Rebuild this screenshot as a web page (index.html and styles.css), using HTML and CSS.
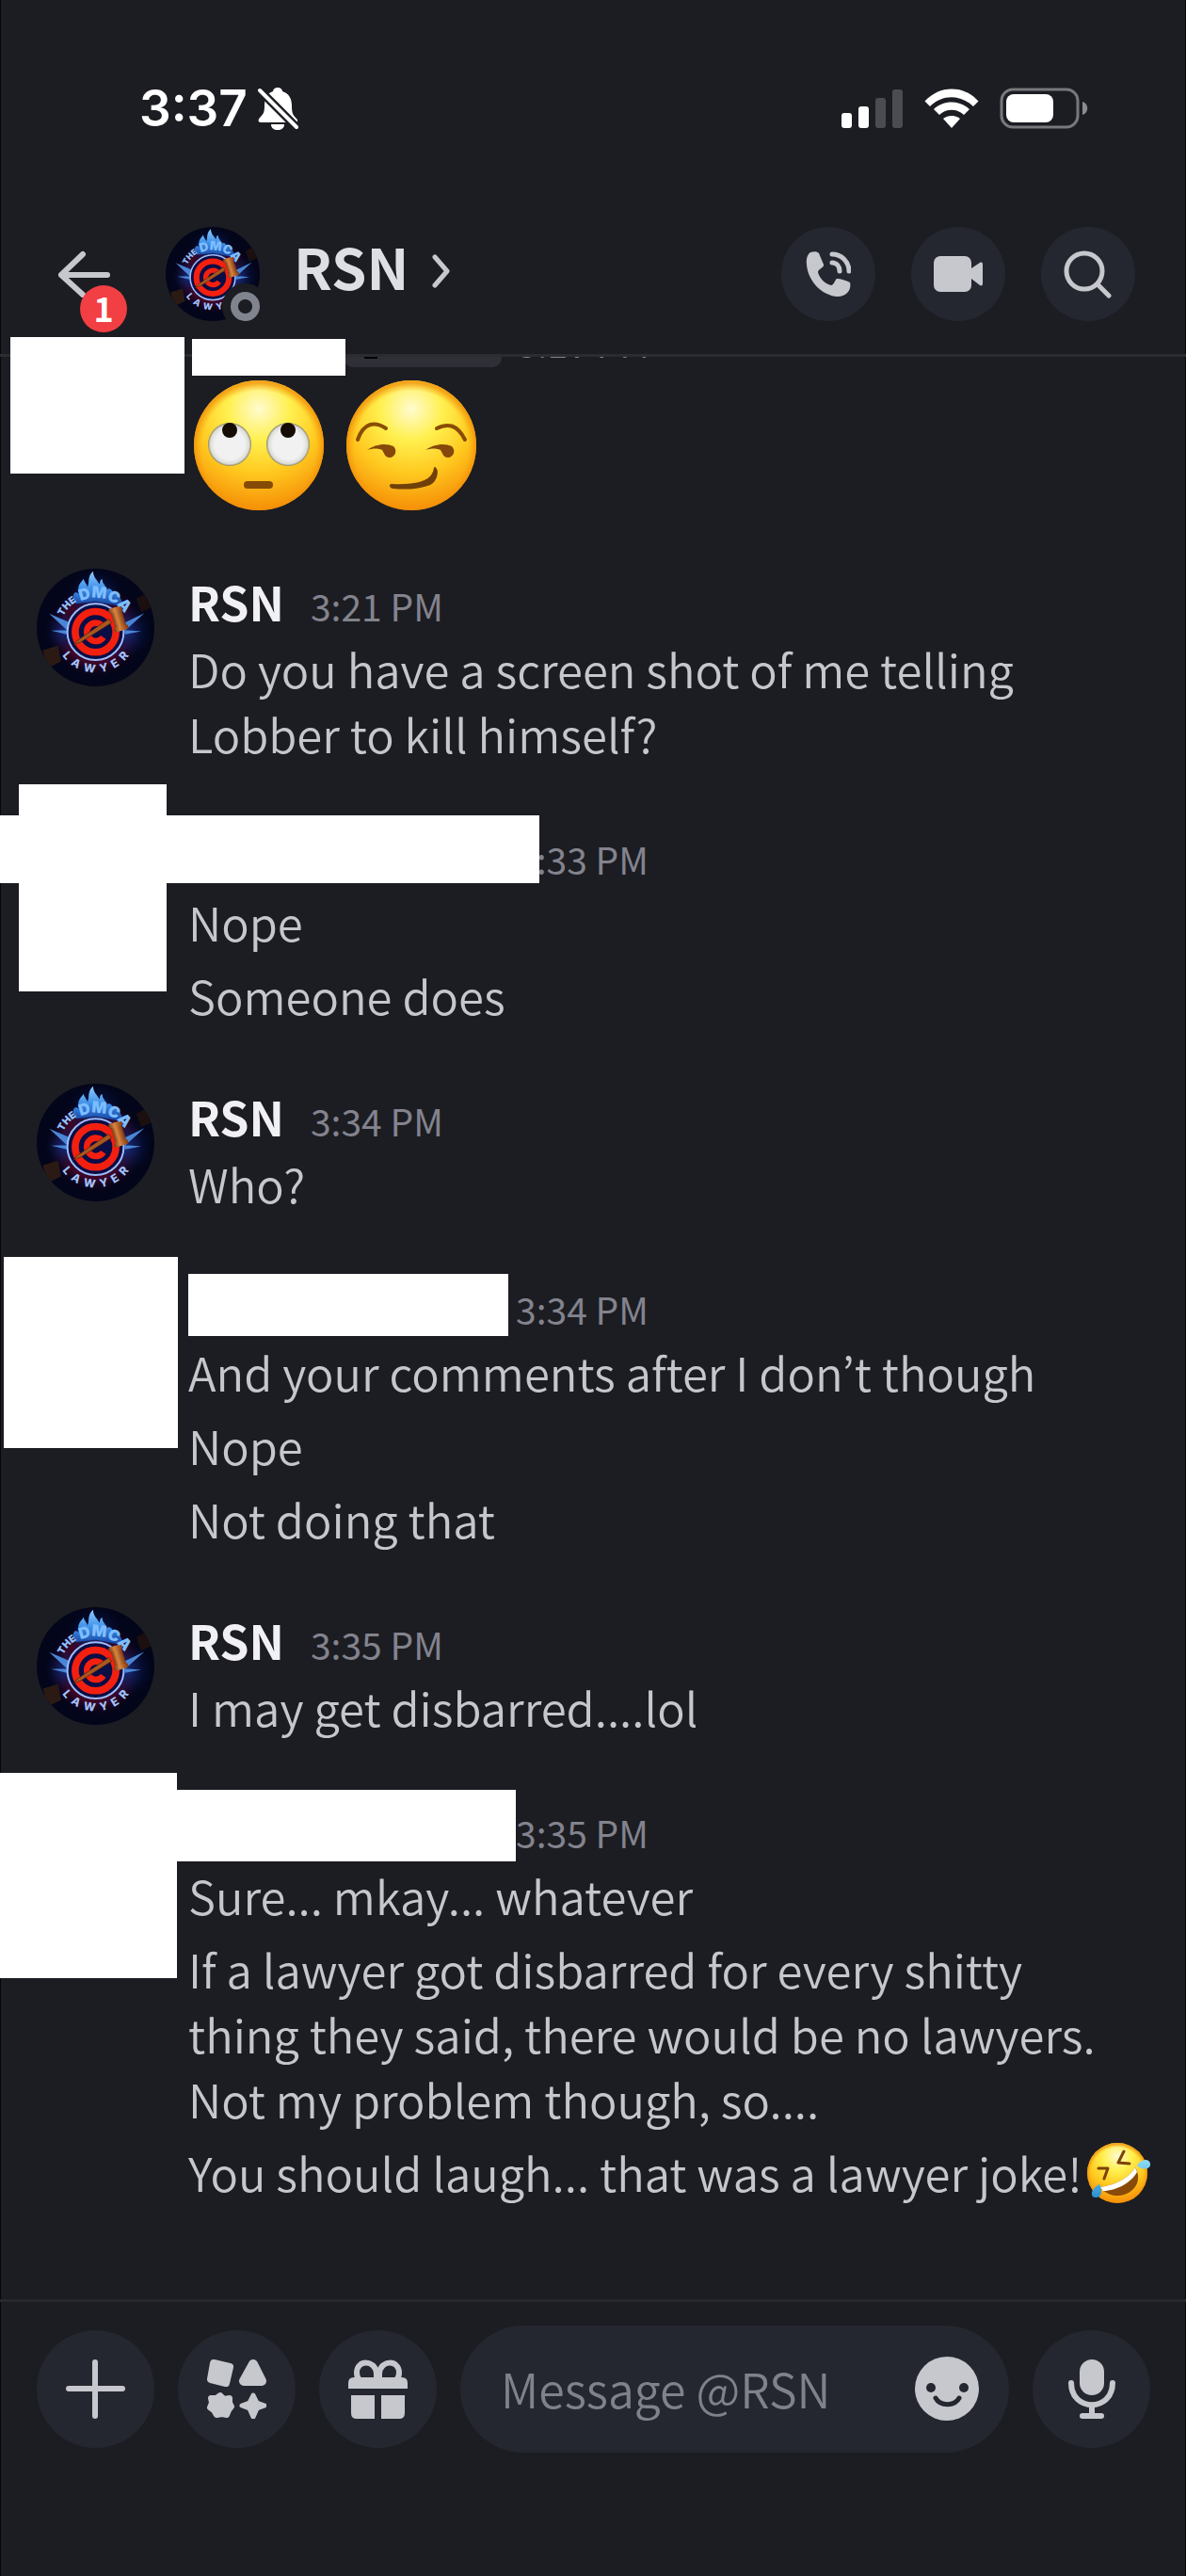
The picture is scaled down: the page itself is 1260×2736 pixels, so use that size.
FILE: index.html
```html
<!DOCTYPE html>
<html lang="en">
<head>
<meta charset="utf-8">
<meta name="viewport" content="width=device-width, initial-scale=1">
<title>RSN</title>
<link rel="stylesheet" href="styles.css">
</head>
<body>
<svg class="defs" aria-hidden="true">
  <defs>
    <radialGradient id="face" cx="50%" cy="22%" r="80%">
      <stop offset="0" stop-color="#fffbd0"/><stop offset=".3" stop-color="#fff04f"/>
      <stop offset=".62" stop-color="#ffc91f"/><stop offset="1" stop-color="#f58a05"/>
    </radialGradient>
    <radialGradient id="rim" cx="50%" cy="52%" r="50%">
      <stop offset=".88" stop-color="#f59a0c" stop-opacity="0"/><stop offset="1" stop-color="#f08c06" stop-opacity=".75"/>
    </radialGradient>
    <radialGradient id="eyeball" cx="50%" cy="50%" r="50%">
      <stop offset=".7" stop-color="#f1f1f1"/><stop offset=".9" stop-color="#dcdcd8"/><stop offset="1" stop-color="#8b8460"/>
    </radialGradient>
    <linearGradient id="tear" x1="0" y1="0" x2="0" y2="1">
      <stop offset="0" stop-color="#8fdcf8"/><stop offset="1" stop-color="#2a8fd0"/>
    </linearGradient>
    <radialGradient id="glowBlue"><stop offset="0" stop-color="#0a338c"/><stop offset="1" stop-color="#04103c" stop-opacity="0"/></radialGradient>
    <radialGradient id="glowRed"><stop offset=".7" stop-color="#3d0628"/><stop offset="1" stop-color="#14041c" stop-opacity="0"/></radialGradient>
    <linearGradient id="flame" x1="0" y1="0" x2="0" y2="1"><stop offset="0" stop-color="#8fcbff"/><stop offset=".5" stop-color="#3d8fe8"/><stop offset="1" stop-color="#123f9c"/></linearGradient>
    <linearGradient id="wood" x1="0" y1="0" x2="1" y2="0"><stop offset="0" stop-color="#7a3a16"/><stop offset=".4" stop-color="#d98540"/><stop offset="1" stop-color="#7a3512"/></linearGradient>
    <clipPath id="disc"><circle cx="188" cy="188" r="188"/></clipPath>
    <path id="arcThe" d="M74 201A114 114 0 0 1 302 201"/>
    <path id="arcTop" d="M80 201A108 108 0 0 1 296 201"/>
    <path id="arcBottom" d="M57 201A131 131 0 0 0 319 201"/>
  </defs>
  <symbol id="avatar" viewBox="0 0 376 376">
    <g clip-path="url(#disc)">
      <rect width="376" height="376" fill="#03051a"/>
      <circle cx="188" cy="196" r="152" fill="url(#glowRed)"/>
      <circle cx="280" cy="200" r="90" fill="url(#glowBlue)"/>
      <circle cx="95" cy="200" r="70" fill="url(#glowBlue)"/>
      <circle cx="188" cy="90" r="90" fill="url(#glowBlue)"/>
      <path d="M20 260l48-14 10 50-44 22z" fill="#2b1a14"/>
      <path d="M318 96l30-16 20 44-34 14z" fill="#1b100f"/>
      <path d="M40 144l66 28-8 26zM46 198l52-2-2 14zM344 142l-70 34 8 22zM334 200l-52-4v14z" fill="#4a86d6"/>
      <path d="M126 112C108 92 118 64 136 82c-10-28 6-38 14-50 2 12 10 16 12 26 8-14-2-32 18-50 2 24 14 26 20 42 4-6 0-14 10-16-2 14 12 18 12 32 12-6 22 2 20 14 18-2 30 16 36 42L188 104z" fill="url(#flame)"/>
      <circle cx="188" cy="202" r="90" fill="#0b0d45" stroke="#9dbcf8" stroke-width="6"/>
      <circle cx="188" cy="202" r="65" fill="none" stroke="#f4200f" stroke-width="23"/>
      <path d="M213 186a29 29 0 1 0 0 33" fill="none" stroke="#f4200f" stroke-width="20"/>
      <path d="M118 243l12-14 100-68 9 12-99 62z" fill="#a8581f" stroke="#4b1c10" stroke-width="2"/>
      <g transform="rotate(-17 260 160)">
        <rect x="243" y="130" width="36" height="62" fill="url(#wood)"/>
        <rect x="238" y="122" width="46" height="15" rx="5" fill="url(#wood)"/>
        <rect x="238" y="185" width="46" height="15" rx="5" fill="url(#wood)"/>
      </g>
      <text class="crest crest-the"><textPath href="#arcThe" startOffset="50">THE</textPath></text>
      <text class="crest crest-dmca"><textPath href="#arcTop" startOffset="120">DMCA</textPath></text>
      <text class="crest crest-lawyer"><textPath href="#arcBottom" startOffset="50%" text-anchor="middle">L&#8194;A&#8194;W&#8194;Y&#8194;E&#8194;R</textPath></text>
    </g>
  </symbol>
</svg>

<div class="app">
  <div class="status-bar">
    <div class="clock">
      <span>3:37</span>
      <svg width="44" height="46" viewBox="0 0 44 46" aria-label="Silent">
        <path d="M22 1c3 0 5 2 5 4 7 2 10 8 10 15 0 8 1 10 5 14 2 2 1 4-1 4H4c-3 0-3-3-1-5 4-4 5-6 5-13C8 12 11 7 17 5c0-2 2-4 5-4zM15 40h14c0 4-3 6-7 6s-7-2-7-6z" fill="#fff"/>
        <path d="M3 4l39 39" stroke="#1c1d22" stroke-width="9"/>
        <path d="M3 4l39 39" stroke="#fff" stroke-width="4" stroke-linecap="round"/>
      </svg>
    </div>
    <div class="indicators">
      <svg width="66" height="42" viewBox="0 0 66 42" aria-label="Signal"><g fill="#fff"><rect y="26" width="11" height="16" rx="3"/><rect x="18" y="19" width="11" height="23" rx="3"/></g><g fill="#4b4c51"><rect x="36" y="10" width="11" height="32" rx="3"/><rect x="54" y="1" width="11" height="41" rx="3"/></g></svg>
      <svg width="58" height="42" viewBox="0 0 58 42" aria-label="Wi-Fi"><path d="M0.500 13.500C16-4 42-4 57.500 13.500L52 19C39 6 19 6 6 19zM10 22C20 12 38 12 48 22l-6 6C35 21 23 21 16 28zM20 32c5-4 13-4 18 0l-9 10z" fill="#fff"/></svg>
      <svg width="94" height="44" viewBox="0 0 94 44" aria-label="Battery"><rect x="2" y="2" width="81" height="40" rx="12" fill="none" stroke="#77787c" stroke-width="3"/><rect x="7" y="7" width="50" height="30" rx="8" fill="#fff"/><path d="M88 15c7 2 7 12 0 14z" fill="#8a8b8f"/></svg>
    </div>
  </div>

  <header class="top-bar">
    <button class="back" type="button" aria-label="Back, 1 unread">
      <svg width="58" height="50" viewBox="0 0 58 50"><path d="M53 26H4M27 4L4 26l23 21" fill="none" stroke="#c7c8ce" stroke-width="6" stroke-linecap="round" stroke-linejoin="round"/></svg>
      <span class="badge">1</span>
    </button>
    <div class="peer-avatar">
      <svg width="100" height="100"><use href="#avatar"/></svg>
      <span class="presence"></span>
    </div>
    <h1 class="peer-name">RSN</h1>
    <svg class="chevron" width="20" height="36" viewBox="0 0 20 36" aria-hidden="true"><path d="M3 3l13 15L3 33" fill="none" stroke="#c7c8ce" stroke-width="5" stroke-linecap="round" stroke-linejoin="round"/></svg>
    <nav class="actions">
      <button class="round small" type="button" aria-label="Voice call">
        <svg width="48" height="58" viewBox="0 0 48 58"><path d="M5 6c4-1 7-1 9 1l5 12c1 3-6 5-6 8 1 6 8 13 14 14 3 0 4-6 6-7 4 0 10 2 14 4 2 8-4 15-13 15C16 52 2 35 1 19 0 13 2 8 5 6z" fill="#c7c8ce"/><path d="M28 8c10 0 18 8 18 18M28 17c5 0 8 4 8 9" fill="none" stroke="#c7c8ce" stroke-width="5" stroke-linecap="round"/></svg>
      </button>
      <button class="round small" type="button" aria-label="Video call">
        <svg width="52" height="38" viewBox="0 0 52 38"><rect width="40" height="38" rx="7" fill="#c7c8ce"/><path d="M40 13l9-6c2-1 3 0 3 2v20c0 2-1 3-3 2l-9-7z" fill="#c7c8ce"/></svg>
      </button>
      <button class="round small" type="button" aria-label="Search">
        <svg width="52" height="52" viewBox="0 0 52 52"><circle cx="22" cy="23" r="19" fill="none" stroke="#c7c8ce" stroke-width="5"/><path d="M36 37l12 12" stroke="#c7c8ce" stroke-width="5" stroke-linecap="round"/></svg>
      </button>
    </nav>
  </header>

  <main class="chat">
    <section class="message clipped">
      <span class="mask mask-a"></span>
      <span class="mask mask-b"></span>
      <div class="body">
        <div class="meta tag-row"><span class="tag"><i></i></span><time>3:17 PM</time></div>
        <div class="big-emoji">
          <svg width="138" height="138" viewBox="0 0 138 138" role="img" aria-label="Face with rolling eyes">
            <circle cx="69" cy="69" r="69" fill="url(#face)"/><circle cx="69" cy="69" r="69" fill="url(#rim)"/>
            <circle cx="38" cy="68" r="23" fill="url(#eyeball)"/><circle cx="100" cy="68" r="23" fill="url(#eyeball)"/>
            <circle cx="38" cy="53" r="8" fill="#150c05"/><circle cx="100" cy="53" r="8" fill="#150c05"/>
            <rect x="53" y="107" width="31" height="8" rx="4" fill="#854a06"/>
          </svg>
          <svg width="138" height="138" viewBox="0 0 138 138" role="img" aria-label="Smirking face">
            <circle cx="69" cy="69" r="69" fill="url(#face)"/><circle cx="69" cy="69" r="69" fill="url(#rim)"/>
            <path d="M12 63c6-18 18-20 30-12M96 51c12-6 22-4 30 12" fill="none" stroke="#8a4c04" stroke-width="4" stroke-linecap="round"/>
            <path d="M22 74c8-6 20-8 28-4 5 5 1 12-4 12-5 0-6-5-8-8-4-2-10-2-16 0zM84 74c8-6 20-8 28-4 5 5 1 12-4 12-5 0-6-5-8-8-4-2-10-2-16 0z" fill="#85480a"/>
            <path d="M48 111c22 1 44-1 46-18 4 4 1 16-8 18-12 4-26 4-36 3-3 0-4-3-2-3z" fill="#70400a" stroke="#70400a" stroke-width="2" stroke-linejoin="round"/>
          </svg>
        </div>
      </div>
    </section>

    <section class="message">
      <svg class="avatar" width="125" height="125"><use href="#avatar"/></svg>
      <div class="body">
        <div class="meta"><strong>RSN</strong><time>3:21 PM</time></div>
        <p>Do you have a screen shot of me telling Lobber to kill himself?</p>
      </div>
    </section>

    <section class="message">
      <span class="mask mask-c"></span>
      <span class="mask mask-d"></span>
      <div class="body">
        <div class="meta"><span class="unnamed"></span><time>3:33 PM</time></div>
        <p>Nope</p>
        <p>Someone does</p>
      </div>
    </section>

    <section class="message">
      <svg class="avatar" width="125" height="125"><use href="#avatar"/></svg>
      <div class="body">
        <div class="meta"><strong>RSN</strong><time>3:34 PM</time></div>
        <p>Who?</p>
      </div>
    </section>

    <section class="message">
      <span class="mask mask-e"></span>
      <span class="mask mask-f"></span>
      <div class="body">
        <div class="meta"><span class="unnamed"></span><time>3:34 PM</time></div>
        <p>And your comments after I don’t though</p>
        <p>Nope</p>
        <p>Not doing that</p>
      </div>
    </section>

    <section class="message">
      <svg class="avatar" width="125" height="125"><use href="#avatar"/></svg>
      <div class="body">
        <div class="meta"><strong>RSN</strong><time>3:35 PM</time></div>
        <p>I may get disbarred....lol</p>
      </div>
    </section>

    <section class="message">
      <span class="mask mask-g"></span>
      <span class="mask mask-h"></span>
      <div class="body">
        <div class="meta"><span class="unnamed"></span><time>3:35 PM</time></div>
        <p>Sure... mkay... whatever</p>
        <p>If a lawyer got disbarred for every shitty thing they said, there would be no lawyers. Not my problem though, so....</p>
        <p class="with-emoji"><span>You should laugh... that was a lawyer joke!</span>
          <svg width="68" height="69" viewBox="0 -3 68 69" role="img" aria-label="Rolling on the floor laughing">
            <circle cx="33" cy="33" r="32" fill="url(#face)"/><circle cx="33" cy="33" r="32" fill="url(#rim)"/>
            <path d="M15 48C30 46 46 38 52 27c5 8 4 18-3 24-10 9-26 8-34-3z" fill="#8a4b08"/>
            <path d="M15 48C30 46 46 38 52 27l2 5C48 43 32 52 18 52z" fill="#fff"/>
            <path d="M13 28l10 0-4 11M40 10l-6 12 12 1" fill="none" stroke="#7d4208" stroke-width="3" stroke-linecap="round" stroke-linejoin="round"/>
            <path d="M54 25c4-7 13-8 14-2s-8 8-14 2zM14 45c4 7 2 14-4 14s-6-9 4-14z" fill="url(#tear)"/>
          </svg>
        </p>
      </div>
    </section>
  </main>

  <footer class="composer">
    <button class="round" type="button" aria-label="Add attachment">
      <svg width="63" height="63" viewBox="0 0 63 63"><path d="M31 3v57M3 31h57" stroke="#c7c8ce" stroke-width="6" stroke-linecap="round"/></svg>
    </button>
    <button class="round" type="button" aria-label="Apps">
      <svg width="63" height="63" viewBox="0 0 63 63" fill="#c7c8ce" stroke="#c7c8ce" stroke-linejoin="round">
        <path d="M7 4l17 4-4 17L4 21z" stroke-width="8"/><path d="M49 5L39 23h19z" stroke-width="10"/>
        <path d="M14 38l4 4 6-1 0 5 2 4-3 4-2 5-5-1-6 1-3-5-4-3 2-5-1-5 6 0z" stroke-width="6"/>
        <path d="M49 38l4 8 8 3-8 3-4 9-4-9-8-3 8-3z" stroke-width="5"/>
      </svg>
    </button>
    <button class="round" type="button" aria-label="Send a gift">
      <svg width="63" height="63" viewBox="0 0 63 63"><path d="M30 22V15C29 0 9 0 9 14c0 3 1 6 3 8M33 22V15C34 0 54 0 54 14c0 3-1 6-3 8" fill="none" stroke="#c7c8ce" stroke-width="6"/><path d="M6 19h51q6 0 6 6v6H0v-6q0-6 6-6zM3 38h25v25H9q-6 0-6-6zM35 38h25v19q0 6-6 6H35z" fill="#c7c8ce"/></svg>
    </button>
    <div class="field">
      <input type="text" placeholder="Message @RSN" aria-label="Message @RSN">
      <button class="emoji-button" type="button" aria-label="Emoji">
        <svg width="69" height="69" viewBox="0 0 69 69"><circle cx="34" cy="34" r="34" fill="#c7c8ce"/><circle cx="17" cy="33" r="5" fill="#24272f"/><circle cx="52" cy="33" r="5" fill="#24272f"/><path d="M22 44c5 9 20 9 25 0" fill="none" stroke="#24272f" stroke-width="5" stroke-linecap="round"/></svg>
      </button>
    </div>
    <button class="round" type="button" aria-label="Record voice message">
      <svg width="50" height="63" viewBox="0 0 50 63"><rect x="12" width="26" height="38" rx="13" fill="#c7c8ce"/><path d="M3 25c0 31 44 31 44 0M25 49v10M15 60h20" fill="none" stroke="#c7c8ce" stroke-width="6" stroke-linecap="round"/></svg>
    </button>
  </footer>
</div>
</body>
</html>
```
FILE: styles.css
```css
* { box-sizing: border-box; }

body {
  margin: 0;
  background: #1c1d22;
  color: #c6c7cd;
  font-family: "Noto Sans CJK KR", "Noto Sans", sans-serif;
  font-size: 49px;
  font-weight: 350;
  line-height: 69px;
}

button {
  padding: 0;
  border: 0;
  background: none;
  color: inherit;
  font: inherit;
}

svg { display: block; flex: none; }

.defs { position: absolute; width: 0; height: 0; }

.crest { font-family: Inter, sans-serif; font-weight: 900; fill: #8fc0ff; }
.crest-the { font-size: 32px; }
.crest-dmca { font-size: 50px; fill: #7dbdff; }
.crest-lawyer { font-size: 36px; font-weight: 800; fill: #a3c3fb; }

.app {
  display: flex;
  flex-direction: column;
  min-height: 100vh;
  box-shadow: inset 1px 0 #07070a, inset -1px 0 #07070a;
}

/* Status bar */
.status-bar {
  display: flex;
  align-items: center;
  justify-content: space-between;
  padding: 85px 104px 0 148px;
}

.clock {
  display: flex;
  align-items: center;
  gap: 10px;
  color: #fff;
  font: 600 53px/60px Inter, sans-serif;
}

.indicators { display: flex; align-items: center; gap: 22px; }

/* Conversation header */
.top-bar {
  position: relative;
  z-index: 1;
  display: flex;
  align-items: center;
  padding: 96px 54px 35px 61px;
  border-bottom: 3px solid #2b2c32;
}

.back { position: relative; margin-right: 57px; }

.badge {
  position: absolute;
  left: 24px;
  top: 37px;
  width: 50px;
  height: 50px;
  border-radius: 50%;
  background: #f23f43;
  color: #fff;
  font-weight: 700;
  font-size: 36px;
  line-height: 46px;
}

.peer-avatar { position: relative; margin-right: 36px; }

.presence {
  position: absolute;
  right: -9px;
  bottom: -9px;
  width: 49px;
  height: 49px;
  border: 9px solid #1c1d22;
  border-radius: 50%;
  background: radial-gradient(circle, #1c1d22 7px, #80848e 8px);
}

.peer-name {
  margin: 0 25px 20px 0;
  color: #dedfe4;
  font-size: 60px;
  font-weight: 700;
}

.chevron { margin-bottom: 6px; }

.actions { display: flex; gap: 38px; margin-left: auto; }

.round {
  display: flex;
  align-items: center;
  justify-content: center;
  flex: none;
  width: 125px;
  height: 125px;
  border-radius: 50%;
  background: #24272f;
}

.round.small { width: 100px; height: 100px; }

/* Messages */
.chat { flex: 1; padding-bottom: 98px; }

.message {
  position: relative;
  display: flex;
  margin-top: 60px;
  padding: 0 38px 0 200px;
}

.avatar { position: absolute; left: 39px; top: 0; }

.body { flex: 1; }

.meta {
  display: flex;
  align-items: baseline;
  gap: 28px;
  height: 71px;
}

.meta strong { color: #f1f1f5; font-size: 50px; font-weight: 700; }
.meta time { color: #83838e; font-size: 39px; font-weight: 400; }
.unnamed { width: 320px; font-size: 50px; }
.unnamed::before { content: "\200b"; }

.message p { margin: 0; padding-right: 40px; }
.message p + p { margin-top: 9px; }

.message .with-emoji { display: flex; align-items: center; gap: 4px; padding-right: 0; }
.with-emoji span { white-space: nowrap; }

.clipped { margin-top: 0; padding-bottom: 2px; }

.tag-row {
  height: 25px;
  padding-left: 165px;
  gap: 16px;
  align-items: flex-end;
  overflow: hidden;
}

.tag-row time { align-self: flex-start; line-height: 60px; margin-top: -46px; }

.tag {
  align-self: flex-start;
  width: 168px;
  height: 11px;
  padding-left: 22px;
  border-radius: 0 0 10px 10px;
  background: #2f3037;
}

.tag i { display: block; width: 14px; height: 2px; background: #000; }

.big-emoji { display: flex; gap: 24px; padding-left: 6px; }

/* Hidden identities */
.mask { position: absolute; z-index: 2; background: #fff; }
.mask-a { left: 11px; top: -21px; width: 185px; height: 145px; }
.mask-b { left: 204px; top: -19px; width: 163px; height: 39px; }
.mask-c { left: 20px; top: -40px; width: 157px; height: 220px; }
.mask-d { left: 0; top: -7px; width: 573px; height: 72px; }
.mask-e { left: 4px; top: -16px; width: 185px; height: 203px; }
.mask-f { left: 200px; top: 2px; width: 340px; height: 66px; }
.mask-g { left: 0; top: -24px; width: 188px; height: 218px; }
.mask-h { left: 188px; top: -6px; width: 360px; height: 76px; }

/* Composer */
.composer {
  display: flex;
  align-items: center;
  gap: 25px;
  padding: 25px 38px 131px 39px;
  border-top: 3px solid #27282e;
}

.field {
  display: flex;
  align-items: center;
  flex: 1;
  min-width: 0;
  height: 135px;
  padding: 0 31px 0 43px;
  border-radius: 68px;
  background: #24272f;
}

.field input {
  flex: 1;
  min-width: 0;
  height: 80px;
  margin-bottom: 4px;
  padding: 0;
  border: 0;
  outline: 0;
  background: none;
  color: #c6c7cd;
  font: inherit;
  font-size: 50px;
  line-height: 80px;
}

.field input::placeholder { color: #7f818c; opacity: 1; }
```
